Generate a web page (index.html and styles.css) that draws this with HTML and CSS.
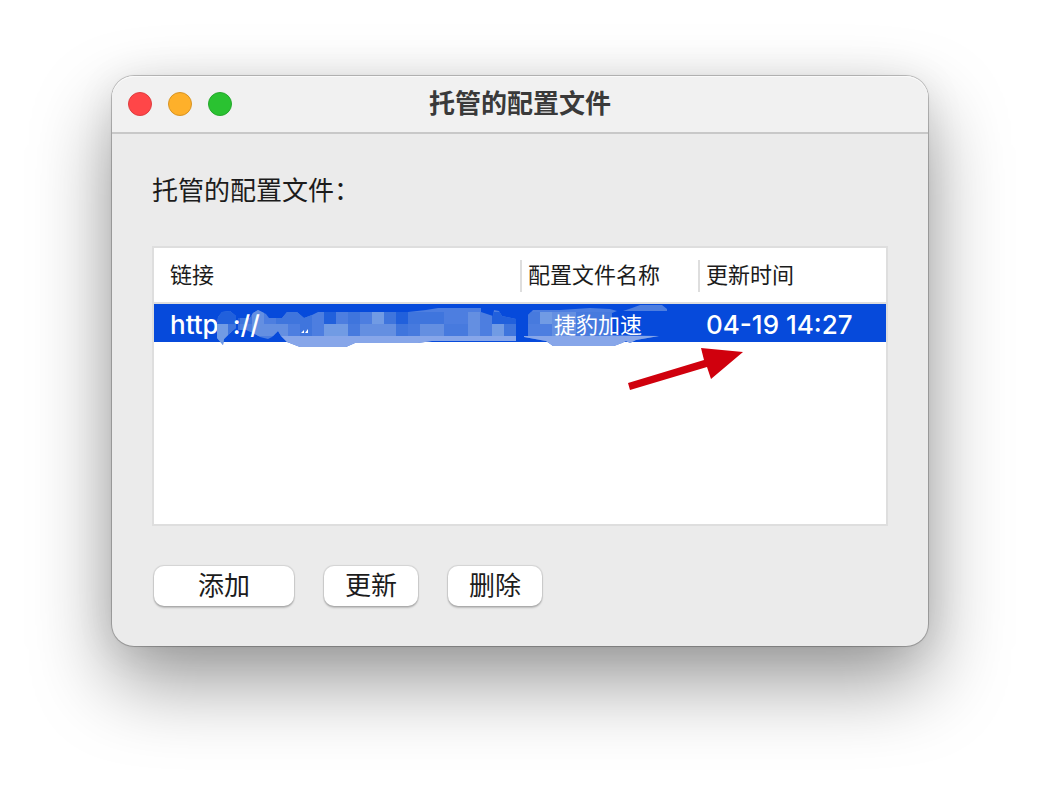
FILE: index.html
```html
<!DOCTYPE html>
<html lang="zh-CN">
<head>
<meta charset="utf-8">
<title>托管的配置文件</title>
<link rel="stylesheet" href="styles.css">
</head>
<body>
<main class="window">
  <header class="titlebar">
    <div class="lights">
      <button class="light close" aria-label="关闭"></button>
      <button class="light minimize" aria-label="最小化"></button>
      <button class="light maximize" aria-label="缩放"></button>
    </div>
    <h1 class="title">托管的配置文件</h1>
  </header>
  <section class="content">
    <h2 class="label" id="list-label">托管的配置文件：</h2>
    <div class="list">
      <table class="profiles" aria-labelledby="list-label">
        <colgroup><col class="col-link"><col class="col-name"><col></colgroup>
        <thead>
          <tr><th scope="col">链接</th><th scope="col">配置文件名称</th><th scope="col">更新时间</th></tr>
        </thead>
        <tbody>
          <tr class="selected"><td>https<span class="above">://</span></td><td class="name"><span class="above">捷豹加速</span></td><td>04-19 14:27</td></tr>
        </tbody>
      </table>
      <svg class="marks" viewBox="154 304 732 100" width="732" height="100" aria-hidden="true">
        <defs>
          <clipPath id="smudge">
            <path d="M217 325L218 317L222 312L230 311L236 316V328L230 333L224 339L223 345L217 338Z"/>
            <path d="M238 318H250L253 313L258 310L266 314L269 318H282L287 312H297L304 318L312 315L318 312H408L426 310L438 308H481V312L493 316L494 310L499 311L502 316L516 319V341H432L418 343H355L346 347H300L287 342L281 336L278 331L275 334L272 337L268 339L260 337L253 333L246 330H238Z"/>
            <path d="M528 315L533 310H560L590 308L610 309L617 311L612 313V335L659 336L636 340L630 343L626 341L622 343L614 346H553L546 341L524 337V336H528Z"/>
            <path d="M623 311L632 308L640 305H662L667 309V311Z"/>
          </clipPath>
        </defs>
        <g clip-path="url(#smudge)" shape-rendering="crispEdges">
          <path fill="#4d7ee0" d="M216 300H676V350H216Z"/>
          <path fill="#87a6e9" d="M276 336H516V350H276ZM520 336H676V350H520Z"/>
          <path fill="#2160dc" d="M216 300H240V324H216ZM324 312H336V324H324ZM396 312H408V324H396ZM492 312H516V324H492Z"/>
          <path fill="#719be4" d="M216 324H228V348H216ZM324 324H348V336H324ZM372 312H384V324H372ZM492 324H504V336H492ZM540 312H552V324H540Z"/>
          <path fill="#3f75dd" d="M228 324H240V336H228ZM240 312H252V324H240ZM276 312H312V324H276ZM300 324H312V336H300ZM348 312H360V324H348ZM384 312H396V324H384ZM408 312H444V324H408ZM396 324H408V336H396ZM504 324H516V336H504Z"/>
          <path fill="#648fe1" d="M252 300H264V324H252ZM252 324H288V336H252ZM360 324H396V336H360ZM420 324H444V336H420ZM468 312H480V336H468ZM552 312H576V336H552Z"/>
          <path fill="#477ade" d="M348 324H360V336H348ZM408 324H420V336H408ZM444 324H468V336H444ZM528 312H540V324H528ZM576 312H612V336H576Z"/>
        </g>
        <path fill="#fff" d="M301 333L304 330V333ZM305 333L308 329V333Z"/>
        <path fill="#d0000d" d="M628 383L704 360L701 348L743 352L711 379L707 367L630 390Z"/>
      </svg>
    </div>
    <div class="actions">
      <button class="button wide">添加</button>
      <button class="button">更新</button>
      <button class="button">删除</button>
    </div>
  </section>
</main>
</body>
</html>
```
FILE: styles.css
```css
* {
  box-sizing: border-box;
}

html {
  min-height: 100%;
  background: #fff;
}

body {
  min-height: 100vh;
  margin: 0;
  padding: 76px 112px;
  color: #1c1c1c;
  font-family: Inter, "Noto Sans CJK SC", sans-serif;
}

.window {
  border-radius: 22px;
  background: #ebebeb;
  box-shadow: 0 0 0 1px rgba(0, 0, 0, .2), 0 0 3px rgba(0, 0, 0, .1), 0 36px 80px rgba(0, 0, 0, .4), 0 4px 40px rgba(0, 0, 0, .08);
}

.titlebar {
  display: grid;
  grid-template-columns: 1fr auto 1fr;
  align-items: center;
  height: 58px;
  padding: 0 16px;
  border-bottom: 2px solid #c8c8c8;
  border-radius: 22px 22px 0 0;
  background: #f1f1f1;
  box-shadow: inset 0 1px #fafafa;
}

.lights {
  display: flex;
  gap: 16px;
}

.light {
  width: 24px;
  height: 24px;
  padding: 0;
  border: 1px solid;
  border-radius: 50%;
}

.close {
  border-color: #df3d3f;
  background: #ff4648;
}

.minimize {
  border-color: #d89423;
  background: #feb02a;
}

.maximize {
  border-color: #25a82c;
  background: #2ac231;
}

.title {
  margin: 0;
  color: #3a3a3a;
  font-size: 26px;
  font-weight: 700;
  line-height: 36px;
}

.content {
  padding: 38px 40px 40px;
}

.label {
  margin: 0 0 36px;
  font-size: 26px;
  font-weight: 400;
  line-height: 38px;
}

.list {
  position: relative;
  min-height: 280px;
  border: 2px solid #dedede;
  background: #fff;
}

.profiles {
  width: 100%;
  table-layout: fixed;
  border-collapse: separate;
  border-spacing: 0;
}

.col-link {
  width: 366px;
}

.col-name {
  width: 178px;
}

.profiles th {
  height: 56px;
  padding: 0 8px;
  border-bottom: 2px solid #dedede;
  background: linear-gradient(#dedede, #dedede) 0 12px / 2px 32px no-repeat;
  font-size: 22px;
  font-weight: 400;
  line-height: 32px;
  text-align: left;
}

.profiles th:first-child {
  padding-left: 16px;
  background: none;
}

.profiles td {
  height: 38px;
  padding: 4px 8px 0;
  background: #064adb;
  color: #fff;
  font-size: 26px;
  font-weight: 500;
  line-height: 34px;
  white-space: nowrap;
}

.profiles td:first-child {
  padding-left: 16px;
}

.profiles .name {
  padding-left: 34px;
  font-size: 22px;
  font-weight: 400;
}

.above {
  position: relative;
  z-index: 2;
}

.marks {
  position: absolute;
  z-index: 1;
  top: 56px;
  left: 0;
}

.actions {
  display: flex;
  gap: 30px;
  padding: 40px 0 0 2px;
}

.button {
  width: 94px;
  height: 40px;
  padding: 0 0 4px;
  border: 0;
  border-radius: 10px;
  background: #fff;
  box-shadow: 0 0 1px 1px rgba(0, 0, 0, .1), 0 2px 2px rgba(0, 0, 0, .2);
  color: #1c1c1c;
  font: 400 26px/36px "Noto Sans CJK SC", sans-serif;
}

.wide {
  width: 140px;
}
```
